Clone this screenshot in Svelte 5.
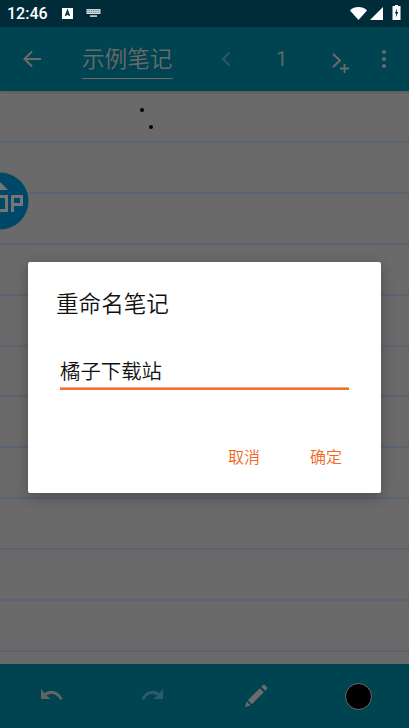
<script>
  const lines = Array.from({ length: 11 });
</script>

<div class="phone">
  <header class="status">
    <span class="time">12:46</span>
    <svg class="ic-a" width="11" height="11" viewBox="0 0 11 11"><rect width="11" height="11" fill="#fff"/><path d="M3.500 8 L5.500 2.500 L7.500 8 M4.300 6.300 H6.700" fill="none" stroke="#00303d" stroke-width="1.400"/></svg>
    <svg class="ic-kb" width="15" height="8" viewBox="0 0 15 8"><path d="M0.500 0 H14.500 V5 H0.500 Z" fill="#d8dedf"/><path d="M1.500 1.300 H13.500 M1.500 3.300 H13.500" stroke="#00303d" stroke-width="0.700" stroke-dasharray="1 0.800"/><rect x="4" y="6.400" width="7" height="1.300" fill="#fff"/></svg>
    <span class="spacer"></span>
    <svg width="17" height="13" viewBox="0 0 17 13"><path d="M0 3.400 C4.600 -1 12.400 -1 17 3.400 L8.500 13 Z" fill="#fff"/></svg>
    <svg class="ic-sig" width="13" height="13" viewBox="0 0 13 13"><path d="M13 0 V13 H0 Z" fill="#fff"/></svg>
    <svg class="ic-bat" width="9" height="15" viewBox="0 0 9 15"><path d="M3 0 H6 V1 H8.500 V15 H0.500 V1 H3 Z" fill="#fff"/><path d="M5 3.500 L2.800 8.500 H4.200 L3.800 12.500 L6.300 7 H4.800 Z" fill="#00303d"/></svg>
  </header>

  <nav class="toolbar">
    <svg class="back" width="20" height="20" viewBox="0 0 20 20"><path d="M19 10 H3 M10 2.500 L2.500 10 L10 17.500" fill="none" stroke="#6b6b6b" stroke-width="2"/></svg>
    <div class="title">示例笔记</div>
    <svg class="prev" width="10" height="16" viewBox="0 0 10 16"><path d="M8.500 1.500 L2 8 L8.500 14.500" fill="none" stroke="#33555f" stroke-width="2"/></svg>
    <span class="page">1</span>
    <svg class="next" width="20" height="22" viewBox="0 0 20 22"><path d="M1 2 L8 8.500 L1 15" fill="none" stroke="#6b6b6b" stroke-width="2"/><path d="M8 16.500 H17 M12.500 12 V21" stroke="#6b6b6b" stroke-width="1.800"/></svg>
    <svg class="more" width="4" height="18" viewBox="0 0 4 18"><circle cx="2" cy="2" r="2" fill="#6b6b6b"/><circle cx="2" cy="9" r="2" fill="#6b6b6b"/><circle cx="2" cy="16" r="2" fill="#6b6b6b"/></svg>
  </nav>

  <main class="paper">
    {#each lines as _}
      <div class="rule"></div>
    {/each}
    <i class="dot d1"></i>
    <i class="dot d2"></i>
    <svg class="top" width="29" height="58" viewBox="0 0 29 58">
      <circle cx="0" cy="29" r="28.500" fill="#004868"/>
      <path d="M0 10 L8 18 H0 Z" fill="#757575"/>
      <path fill-rule="evenodd" d="M0 23 H8 V40 H0 V37 H5 V26 H0 Z M11 23 H23 V34 H14 V40 H11 Z M14 26 V31 H20 V26 Z" fill="#757575"/>
    </svg>
  </main>

  <footer class="bottom">
    <svg class="undo" width="24" height="14" viewBox="0 0 24 14"><path d="M2 0 V10 H11.500 L7.600 6.400 C11.500 3.600 18 4.500 21 11 L23.500 10 C20 1.500 11 -0.500 5.600 4.200 L2 0 Z" fill="#636363"/></svg>
    <svg class="redo" width="24" height="14" viewBox="0 0 24 14"><path d="M22 0 V10 H12.500 L16.400 6.400 C12.500 3.600 6 4.500 3 11 L0.500 10 C4 1.500 13 -0.500 18.400 4.200 L22 0 Z" fill="#2c5a66"/></svg>
    <svg class="pen" width="24" height="24" viewBox="0 0 24 24"><path d="M1 23 L2.500 17.500 L6.500 21.500 Z M3.800 16.200 L15.800 4.200 L19.800 8.200 L7.800 20.200 Z M17.200 2.800 L19 1 C19.600 0.500 20.200 0.500 20.800 1 L23 3.200 C23.500 3.800 23.500 4.400 23 5 L21.200 6.800 Z" fill="#6b6b6b"/></svg>
    <span class="color"></span>
  </footer>

  <div class="dialog">
    <h2>重命名笔记</h2>
    <div class="field">橘子下载站</div>
    <div class="actions">
      <span>取消</span>
      <span>确定</span>
    </div>
  </div>
</div>

<style>
  :global(body) { margin: 0; background: #6a6a6a; }
  .phone {
    position: relative;
    width: 409px;
    height: 728px;
    display: flex;
    flex-direction: column;
    overflow: hidden;
    font-family: Roboto, "Noto Sans CJK SC", sans-serif;
  }
  .status {
    height: 27px;
    flex: none;
    background: #002c39;
    display: flex;
    align-items: center;
    padding: 0 8px 0 7px;
  }
  .time { color: #fff; font-size: 16px; font-weight: 500; width: 55px; }
  .ic-a { margin-top: -1px; }
  .ic-kb { margin-left: 13px; margin-top: -1px; }
  .spacer { flex: 1; }
  .ic-sig { margin-left: 3px; }
  .ic-bat { margin-left: 9px; margin-top: -2px; }
  .toolbar {
    height: 64px;
    flex: none;
    background: #004452;
    display: flex;
    align-items: center;
    position: relative;
    z-index: 1;
    box-shadow: 0 1px 3px rgba(0, 0, 0, 0.18);
  }
  .back { margin-left: 22px; }
  .title {
    margin-left: 40px;
    margin-top: 5px;
    width: 91px;
    font-size: 22.6px;
    font-weight: 350;
    line-height: 32px;
    padding-bottom: 2px;
    color: #6a6a6a;
    border-bottom: 1px solid #6a6a6a;
    white-space: nowrap;
  }
  .prev { margin-left: 48px; }
  .page { margin-left: 45px; color: #60696c; font-size: 20px; width: 11px; }
  .next { margin-left: 45px; margin-top: 7px; }
  .more { margin-left: 30px; }
  .paper {
    flex: 1;
    min-height: 0;
    overflow: hidden;
    position: relative;
    background: #6a6a6a;
    padding-top: 50px;
    display: flex;
    flex-direction: column;
  }
  .rule {
    height: 2px;
    background: #5a6472;
    margin-bottom: 48.9px;
    flex: none;
  }
  .dot { position: absolute; width: 4px; height: 4px; border-radius: 50%; background: #000; }
  .d1 { left: 140px; top: 17px; }
  .d2 { left: 149px; top: 34px; }
  .top { position: absolute; left: 0; top: 81px; }
  .bottom {
    height: 64px;
    flex: none;
    background: #004452;
    display: grid;
    grid-template-columns: 102px 102px 103px 102px;
    align-items: center;
    justify-items: center;
  }
  .color {
    width: 25px;
    height: 25px;
    background: #000;
    border: 1px solid #6b6b6b;
    border-radius: 50%;
  }
  .dialog {
    position: absolute;
    left: 28px;
    top: 262px;
    width: 352.5px;
    height: 230.5px;
    background: #fff;
    border-radius: 2px;
    box-shadow: 0 4px 14px rgba(0, 0, 0, 0.28);
    box-sizing: border-box;
    padding: 28px 32px 0 28px;
    display: flex;
    flex-direction: column;
    z-index: 2;
  }
  h2 {
    margin: 0;
    font-size: 22.6px;
    line-height: 30px;
    font-weight: 350;
    color: #111;
  }
  .field {
    margin: 37px 0 0 4px;
    height: 31px;
    line-height: 30px;
    font-size: 20.4px;
    font-weight: 350;
    color: #111;
    border-bottom: 2px solid #f36f2a;
    box-shadow: inset 0 -1px 0 #f9a77e;
  }
  .actions {
    display: flex;
    justify-content: flex-end;
    gap: 50px;
    margin-top: 57px;
    padding-right: 6.5px;
    color: #f2681f;
    font-size: 16px;
    font-weight: 350;
    line-height: 22px;
  }
</style>
